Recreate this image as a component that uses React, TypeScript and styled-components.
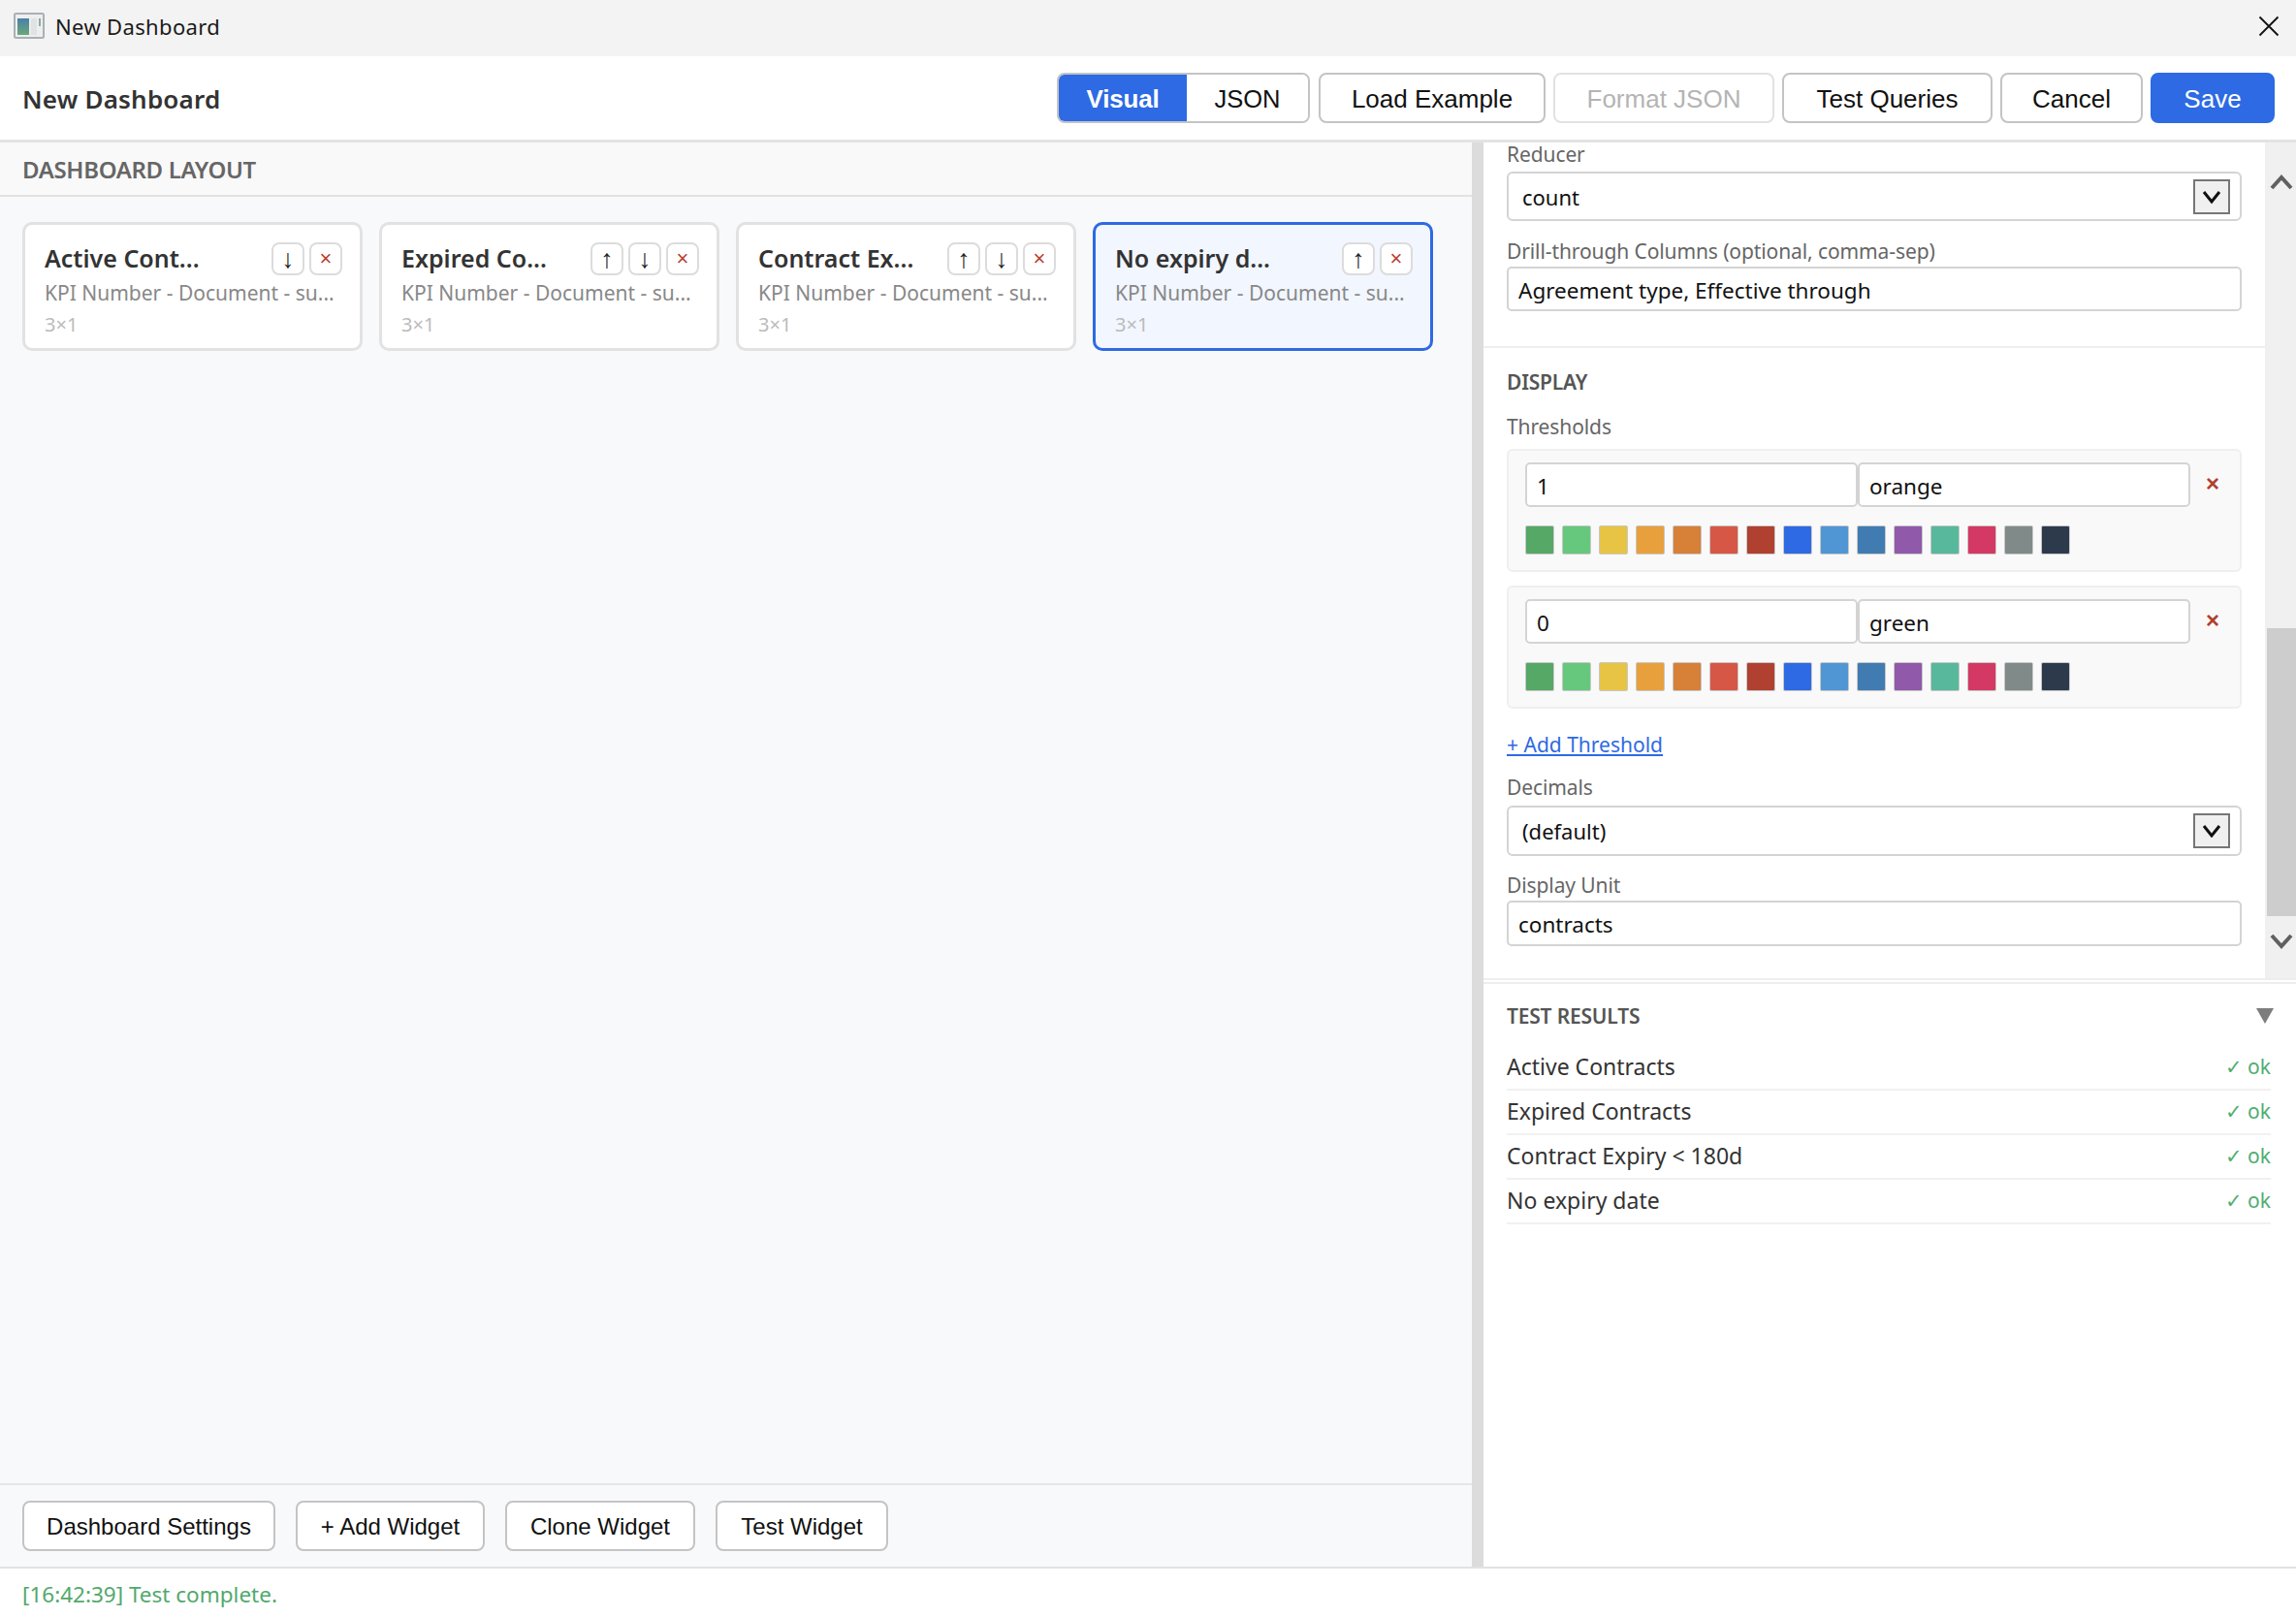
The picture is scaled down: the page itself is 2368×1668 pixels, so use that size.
import React from "react";
import styled, { createGlobalStyle } from "styled-components";

const BLUE = "#2d6ae3";
const UI = `"Noto Sans", "Open Sans", sans-serif`;
const BTN = `"Liberation Sans", Arial, sans-serif`;

const Global = createGlobalStyle`
  html, body { margin: 0; padding: 0; background: #fff; }
  * { box-sizing: border-box; }
`;

const Page = styled.div`
  width: 2368px;
  height: 1668px;
  display: grid;
  grid-template-rows: 58px 89px 1fr 52px;
  font-family: ${UI};
  color: #333;
  overflow: hidden;
`;

const TitleBar = styled.div`
  background: #f3f3f3;
  display: flex;
  align-items: center;
  padding: 0 17px 5px 14px;
`;
const WindowTitle = styled.div`
  margin-left: 11px;
  font-size: 22px;
  color: #1a1a1a;
  letter-spacing: 0.35px;
  flex: 1;
`;

const Header = styled.div`
  background: #fff;
  border-bottom: 3px solid #e3e3e3;
  display: flex;
  align-items: center;
  padding: 0 22px 0 23px;
`;
const PageTitle = styled.div`
  flex: 1;
  font-size: 26px;
  font-weight: 600;
  color: #333;
  letter-spacing: 0.2px;
  padding-top: 2px;
`;
const Toolbar = styled.div<{ $gap: number }>`
  display: flex;
  align-items: center;
  gap: ${(p) => p.$gap}px;
`;
const Button = styled.div<{ $primary?: boolean; $disabled?: boolean; $w: number; $h: number; $fs: number }>`
  width: ${(p) => p.$w}px;
  height: ${(p) => p.$h}px;
  display: flex;
  align-items: center;
  justify-content: center;
  font-family: ${BTN};
  font-size: ${(p) => p.$fs}px;
  padding-top: 2px;
  border-radius: 8px;
  border: 2px solid ${(p) => (p.$primary ? BLUE : p.$disabled ? "#e2e2e2" : "#c4c4c4")};
  background: ${(p) => (p.$primary ? BLUE : "#fff")};
  color: ${(p) => (p.$primary ? "#fff" : p.$disabled ? "#b4b4b4" : "#111")};
`;
const Segmented = styled.div`
  display: flex;
  height: 52px;
  width: 261px;
  border: 2px solid #c4c4c4;
  border-radius: 8px;
  overflow: hidden;
  margin-right: 1px;
`;
const Segment = styled.div<{ $active?: boolean; $w: number }>`
  width: ${(p) => p.$w}px;
  display: flex;
  align-items: center;
  justify-content: center;
  padding-top: 2px;
  font-family: ${BTN};
  font-size: ${(p) => (p.$active ? 26 : 25.5)}px;
  font-weight: ${(p) => (p.$active ? 700 : 400)};
  letter-spacing: ${(p) => (p.$active ? "-0.2px" : 0)};
  background: ${(p) => (p.$active ? BLUE : "#fff")};
  color: ${(p) => (p.$active ? "#fff" : "#111")};
`;

const Main = styled.div`
  display: grid;
  grid-template-columns: 1518px 12px 1fr;
  min-height: 0;
`;
const Left = styled.div`
  background: #f8f9fb;
  display: grid;
  grid-template-rows: 56px 1fr 86px;
  min-height: 0;
`;
const LayoutHead = styled.div`
  background: #f9f9f9;
  border-bottom: 2px solid #e2e2e2;
  display: flex;
  align-items: center;
  padding: 1px 23px 0;
  font-size: 24px;
  font-weight: 600;
  color: #666;
  letter-spacing: -0.35px;
`;
const Cards = styled.div`
  display: flex;
  align-items: flex-start;
  gap: 17px;
  padding: 26px 23px;
`;
const Card = styled.div<{ $selected?: boolean }>`
  width: 351px;
  height: 133px;
  border-radius: 10px;
  border: 3px solid ${(p) => (p.$selected ? BLUE : "#e2e2e2")};
  background: ${(p) => (p.$selected ? "#f2f6fe" : "#fff")};
  padding: 17px 18px 0 20px;
`;
const CardTop = styled.div`
  display: flex;
  align-items: center;
  height: 36px;
`;
const CardTitle = styled.div`
  flex: 1;
  font-size: 25px;
  font-weight: 600;
  color: #333;
  white-space: nowrap;
  margin-top: -2px;
`;
const CardActions = styled.div`
  display: flex;
  gap: 5px;
`;
const MiniButton = styled.div<{ $danger?: boolean }>`
  width: 34px;
  height: 34px;
  border: 2px solid #dcdcdc;
  border-radius: 8px;
  background: #fff;
  display: flex;
  align-items: center;
  justify-content: center;
  font-family: "Liberation Sans", sans-serif;
  font-size: ${(p) => (p.$danger ? 22 : 27)}px;
  line-height: 1;
  color: ${(p) => (p.$danger ? "#b8412f" : "#222")};
`;
const CardSub = styled.div`
  margin-top: 2px;
  font-size: 21px;
  line-height: 30px;
  color: #888;
  white-space: nowrap;
`;
const CardSize = styled.div`
  margin-top: 5px;
  font-size: 20px;
  line-height: 26px;
  color: #bbb;
`;
const BottomBar = styled.div`
  border-top: 2px solid #e6e6e6;
  padding: 16px 23px 0;
`;

const Splitter = styled.div`
  background: #dcdcdc;
`;

const Right = styled.div`
  display: grid;
  grid-template-rows: 864px 1fr;
  background: #fff;
  min-height: 0;
`;
const ScrollPane = styled.div`
  display: flex;
  min-height: 0;
  overflow: hidden;
  border-bottom: 2px solid #eeeeee;
`;
const Form = styled.div`
  width: 806px;
  flex: none;
`;
const Section = styled.div<{ $divider?: boolean; $pb?: number }>`
  padding: 0 24px ${(p) => p.$pb ?? 0}px;
  border-bottom: ${(p) => (p.$divider ? "2px solid #eeeeee" : "none")};
`;
const FieldLabel = styled.div<{ $mt?: number }>`
  margin-top: ${(p) => p.$mt ?? 0}px;
  font-size: 21px;
  line-height: 24px;
  color: #666;
  letter-spacing: -0.1px;
`;
const SectionTitle = styled.div<{ $mt?: number }>`
  margin-top: ${(p) => p.$mt ?? 0}px;
  font-size: 21px;
  line-height: 24px;
  font-weight: 600;
  color: #555;
  letter-spacing: -0.2px;
`;
const SelectBox = styled.div<{ $mt: number; $h: number }>`
  margin-top: ${(p) => p.$mt}px;
  height: ${(p) => p.$h}px;
  border: 2px solid #d4d4d4;
  border-radius: 6px;
  display: flex;
  align-items: center;
  justify-content: space-between;
  padding: 0 10px 0 14px;
  font-size: 22px;
  color: #111;
`;
const SelectArrow = styled.div`
  width: 38px;
  height: 36px;
  border: 2px solid #767676;
  background: #f0f0f0;
  display: flex;
  align-items: center;
  justify-content: center;
`;
const TextBox = styled.div<{ $mt?: number; $h?: number }>`
  margin-top: ${(p) => p.$mt ?? 0}px;
  height: ${(p) => p.$h ?? 46}px;
  border: 2px solid #d4d4d4;
  border-radius: 5px;
  background: #fff;
  display: flex;
  align-items: center;
  padding: 2px 10px 0;
  font-size: 22.5px;
  color: #111;
  white-space: nowrap;
`;
const ThresholdBox = styled.div<{ $mt: number }>`
  margin-top: ${(p) => p.$mt}px;
  height: 127px;
  background: #f9f9f9;
  border: 2px solid #efefef;
  border-radius: 6px;
  padding: 12px 17px 0;
`;
const ThresholdRow = styled.div`
  display: grid;
  grid-template-columns: 343px 343px 1fr;
  height: 46px;
  align-items: center;
`;
const RemoveMark = styled.div`
  font-family: "Liberation Sans", sans-serif;
  font-size: 24px;
  font-weight: 700;
  color: #b0412e;
  text-align: center;
  padding-left: 12px;
  margin-top: -2px;
`;
const Swatches = styled.div`
  display: flex;
  gap: 8px;
  margin-top: 19px;
`;
const Swatch = styled.div<{ $c: string }>`
  width: 30px;
  height: 30px;
  background: ${(p) => p.$c};
  border: 1px solid #c8c8c8;
  border-radius: 2px;
`;
const AddLink = styled.div`
  margin-top: 25px;
  font-size: 21px;
  line-height: 24px;
  color: ${BLUE};
  text-decoration: underline;
`;
const Scrollbar = styled.div`
  flex: 1;
  background: #f0f0f0;
  position: relative;
`;
const ScrollThumb = styled.div`
  position: absolute;
  left: 2px;
  right: 0;
  top: 501px;
  height: 297px;
  background: #cdcdcd;
`;
const ScrollArrow = styled.svg<{ $pos: "top" | "bottom" }>`
  position: absolute;
  left: 5px;
  ${(p) => (p.$pos === "top" ? "top: 32px;" : "bottom: 29px;")}
`;

const Results = styled.div`
  padding: 19px 26px 0 24px;
  border-top: 2px solid #eeeeee;
  margin-top: 2px;
`;
const ResultsHead = styled.div`
  display: flex;
  align-items: center;
  justify-content: space-between;
  height: 28px;
  margin-bottom: 17px;
`;
const ResultsToggle = styled.svg`
  margin-right: -3px;
`;
const ResultRow = styled.div`
  height: 46px;
  display: flex;
  align-items: center;
  justify-content: space-between;
  border-bottom: 2px solid #f1f1f1;
  padding-bottom: 2px;
  font-size: 23px;
  color: #333;
`;
const ResultOk = styled.span`
  font-size: 21px;
  color: #4fae72;
`;

const StatusBar = styled.div`
  border-top: 2px solid #e2e2e2;
  background: #fff;
  padding: 3px 23px 0;
  display: flex;
  align-items: center;
  font-size: 22.5px;
  color: #52a96c;
`;

const COLORS = ["#55a866","#66c87c","#e8c444","#e8a03c","#d68038","#d65746","#b04030","#2d6ae3","#5096d4","#407cb2","#9059a9","#58b89c","#d43864","#808a88","#2c3a4c"];

const WIDGETS = [
  { title: "Active Cont...", up: false, down: true },
  { title: "Expired Co...", up: true, down: true },
  { title: "Contract Ex...", up: true, down: true },
  { title: "No expiry d...", up: true, down: false, selected: true },
];

const RESULTS = ["Active Contracts", "Expired Contracts", "Contract Expiry < 180d", "No expiry date"];

const Chevron = () => (
  <svg width="22" height="14" viewBox="0 0 22 14">
    <path d="M3 2 L11 12 L19 2" fill="none" stroke="#111" strokeWidth="3" />
  </svg>
);

const AppIcon = () => (
  <svg width="32" height="27" viewBox="0 0 32 27">
    <defs>
      <linearGradient id="pane" x1="0" y1="0" x2="0" y2="1">
        <stop offset="0" stopColor="#4a7fa8" />
        <stop offset="1" stopColor="#6aa878" />
      </linearGradient>
    </defs>
    <rect x="1" y="1" width="30" height="25" rx="1.5" fill="#eeeeee" stroke="#a9b0b6" strokeWidth="2" />
    <rect x="4" y="6" width="12" height="17" fill="url(#pane)" />
    <rect x="18" y="6" width="6" height="17" fill="#dfe3e4" />
    <rect x="26" y="6" width="2" height="8" fill="#8fa8a0" />
  </svg>
);

const CloseIcon = () => (
  <svg width="22" height="22" viewBox="0 0 22 22">
    <path d="M1.5 1.5 L20.5 20.5 M20.5 1.5 L1.5 20.5" stroke="#111" strokeWidth="1.8" fill="none" />
  </svg>
);

function Threshold({ mt, value, color }: { mt: number; value: string; color: string }) {
  return (
    <ThresholdBox $mt={mt}>
      <ThresholdRow>
        <TextBox>{value}</TextBox>
        <TextBox>{color}</TextBox>
        <RemoveMark>×</RemoveMark>
      </ThresholdRow>
      <Swatches>
        {COLORS.map((c) => (
          <Swatch key={c} $c={c} />
        ))}
      </Swatches>
    </ThresholdBox>
  );
}

export default function App() {
  return (
    <Page>
      <Global />
      <TitleBar>
        <AppIcon />
        <WindowTitle>New Dashboard</WindowTitle>
        <CloseIcon />
      </TitleBar>

      <Header>
        <PageTitle>New Dashboard</PageTitle>
        <Toolbar $gap={8}>
          <Segmented>
            <Segment $active $w={132}>Visual</Segment>
            <Segment $w={125}>JSON</Segment>
          </Segmented>
          <Button $w={234} $h={52} $fs={26}>Load Example</Button>
          <Button $disabled $w={228} $h={52} $fs={26}>Format JSON</Button>
          <Button $w={217} $h={52} $fs={26}>Test Queries</Button>
          <Button $w={147} $h={52} $fs={26}>Cancel</Button>
          <Button $primary $w={128} $h={52} $fs={26}>Save</Button>
        </Toolbar>
      </Header>

      <Main>
        <Left>
          <LayoutHead>DASHBOARD LAYOUT</LayoutHead>
          <Cards>
            {WIDGETS.map((w) => (
              <Card key={w.title} $selected={w.selected}>
                <CardTop>
                  <CardTitle>{w.title}</CardTitle>
                  <CardActions>
                    {w.up && <MiniButton>↑</MiniButton>}
                    {w.down && <MiniButton>↓</MiniButton>}
                    <MiniButton $danger>×</MiniButton>
                  </CardActions>
                </CardTop>
                <CardSub>KPI Number - Document - su...</CardSub>
                <CardSize>3×1</CardSize>
              </Card>
            ))}
          </Cards>
          <BottomBar>
            <Toolbar $gap={21}>
              <Button $w={261} $h={52} $fs={24}>Dashboard Settings</Button>
              <Button $w={195} $h={52} $fs={24}>+ Add Widget</Button>
              <Button $w={196} $h={52} $fs={24}>Clone Widget</Button>
              <Button $w={178} $h={52} $fs={24}>Test Widget</Button>
            </Toolbar>
          </BottomBar>
        </Left>
        <Splitter />
        <Right>
          <ScrollPane>
            <Form>
              <Section $divider $pb={36}>
                <FieldLabel>Reducer</FieldLabel>
                <SelectBox $mt={6} $h={51}>
                  count
                  <SelectArrow><Chevron /></SelectArrow>
                </SelectBox>
                <FieldLabel $mt={19}>Drill-through Columns (optional, comma-sep)</FieldLabel>
                <TextBox $mt={4}>Agreement type, Effective through</TextBox>
              </Section>
              <Section>
                <SectionTitle $mt={23}>DISPLAY</SectionTitle>
                <FieldLabel $mt={22}>Thresholds</FieldLabel>
                <Threshold mt={11} value="1" color="orange" />
                <Threshold mt={14} value="0" color="green" />
                <AddLink>+ Add Threshold</AddLink>
                <FieldLabel $mt={20}>Decimals</FieldLabel>
                <SelectBox $mt={7} $h={52}>
                  (default)
                  <SelectArrow><Chevron /></SelectArrow>
                </SelectBox>
                <FieldLabel $mt={18}>Display Unit</FieldLabel>
                <TextBox $mt={4} $h={47}>contracts</TextBox>
              </Section>
            </Form>
            <Scrollbar>
              <ScrollThumb />
              <ScrollArrow $pos="top" width="24" height="18" viewBox="0 0 24 18">
                <path d="M2 15 L12 4 L22 15" fill="none" stroke="#606060" strokeWidth="4" />
              </ScrollArrow>
              <ScrollArrow $pos="bottom" width="24" height="18" viewBox="0 0 24 18">
                <path d="M2 3 L12 14 L22 3" fill="none" stroke="#606060" strokeWidth="4" />
              </ScrollArrow>
            </Scrollbar>
          </ScrollPane>
          <Results>
            <ResultsHead>
              <SectionTitle>TEST RESULTS</SectionTitle>
              <ResultsToggle width="18" height="16" viewBox="0 0 18 16">
                <path d="M0 0 H18 L9 16 Z" fill="#7d7d7d" />
              </ResultsToggle>
            </ResultsHead>
            {RESULTS.map((r) => (
              <ResultRow key={r}>
                {r}
                <ResultOk>✓ ok</ResultOk>
              </ResultRow>
            ))}
          </Results>
        </Right>
      </Main>

      <StatusBar>[16:42:39] Test complete.</StatusBar>
    </Page>
  );
}
